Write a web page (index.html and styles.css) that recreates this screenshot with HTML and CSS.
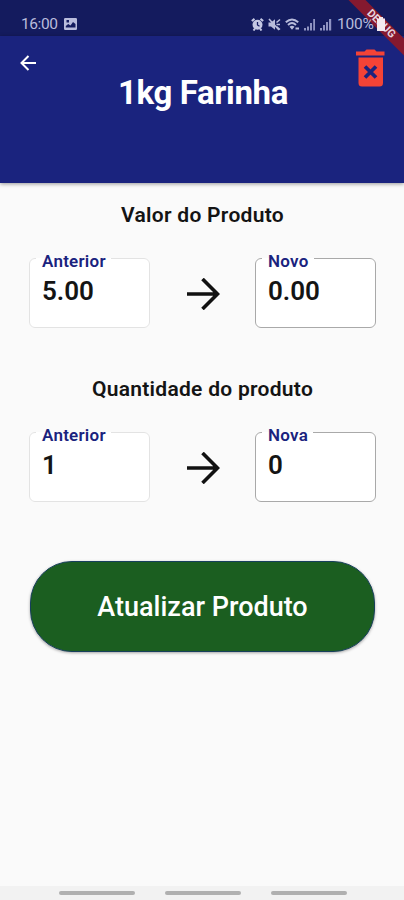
FILE: index.html
```html
<!DOCTYPE html>
<html lang="pt-BR">
<head>
<meta charset="utf-8">
<title>1kg Farinha</title>
<link rel="stylesheet" href="styles.css">
</head>
<body>
<div class="screen">
  <div class="debug"><span>DEBUG</span></div>
  <div class="status">
    <span class="clock">16:00</span>
    <svg class="picture" width="13" height="12" viewBox="0 0 13 12"><path fill="#b9bcdc" fill-rule="evenodd" d="M1.2 0H11.800Q13 0 13 1.200V10.800Q13 12 11.800 12H1.200Q0 12 0 10.800V1.200Q0 0 1.200 0ZM1.800 9.500H11.500V6L9 4 6.500 7.500 4.200 6 1.800 8ZM2.500 2V4.500H5V2Z"/></svg>
    <div class="indicators">
      <svg width="13" height="13" viewBox="0 0 13 13"><g fill="none" stroke="#c5c8e4"><path stroke-width="2" d="M.8 3 3.500 .9M12.200 3 9.500 .9M2.500 12.500 4 10.500M10.500 12.500 9 10.500"/></g><circle cx="6.500" cy="6.800" r="5" fill="#c5c8e4"/><path d="M6.500 4V7L8.500 8.300" fill="none" stroke="#171c63" stroke-width="1.300"/></svg>
      <svg width="13" height="13" viewBox="0 0 13 13"><path fill="#b9bcdc" d="M.5 4.500H3L7 1.200V11.800L3 8.500H.5Z"/><path fill="none" stroke="#b9bcdc" stroke-width="1.600" d="M8.500 4.500 12 1.500M8.500 6.500H12M8.500 8.500 12 11.500M1 1 11 12"/></svg>
      <svg width="15" height="13" viewBox="0 0 15 13"><g fill="none" stroke="#b9bcdc" stroke-width="1.900"><path d="M.8 4.300Q7 -1.500 13.200 4.300M3 7Q7 3.200 11 7"/></g><path fill="#b9bcdc" d="M4.500 8.700Q7 6.700 9.500 8.700L7 11.700ZM10.500 9.500H14V11.500H10.500Z"/></svg>
      <svg width="12" height="13" viewBox="0 0 12 13"><path fill="#8f93c2" d="M0 10H2V12.500H0ZM3 8.500H5V12.500H3ZM6 5H8V12.500H6ZM9.200 1H11V12.500H9.200Z"/></svg>
      <svg width="12" height="13" viewBox="0 0 12 13"><path fill="#8f93c2" d="M0 10H2V12.500H0ZM3 7H5V12.500H3ZM6 4H8V12.500H6ZM9 1H11.200V12.500H9Z"/></svg>
      <span class="percent">100%</span>
      <svg class="battery" width="8" height="14" viewBox="0 0 8 14"><path fill="#f3e9ef" d="M2 0H6V1.500H8V14H0V1.500H2Z"/></svg>
    </div>
  </div>
  <header class="appbar">
    <svg class="back" width="16" height="16" viewBox="0 0 16 16"><path d="M16 8H1.500M8.500 1 1.500 8 8.500 15" fill="none" stroke="#fff" stroke-width="2"/></svg>
    <h1><span>1kg Farinha</span></h1>
    <svg class="trash" width="29" height="38" viewBox="0 0 29 38" preserveAspectRatio="none"><path fill="#f44336" d="M.5 2.500H8.500L10.500 .5H18.500L20.500 2.500H28.500V6.500H0V2.500ZM2.500 8.500H27V34Q27 37.500 23.500 37.500H6Q2.500 37.500 2.500 34Z"/><path d="M9 17.500 20 28.500M20 17.500 9 28.500" stroke="#1a237e" stroke-width="3.700"/></svg>
  </header>
  <main>
    <h2><span class="t-value">Valor do Produto</span></h2>
    <div class="row">
      <fieldset class="field old"><legend>Anterior</legend><span>5.00</span></fieldset>
      <svg class="arrow" width="34" height="32" viewBox="-1 0 34 32"><path d="M0 16H31M15.500 1 30.500 16 15.500 31" fill="none" stroke="#111" stroke-width="3.600"/></svg>
      <fieldset class="field"><legend>Novo</legend><span>0.00</span></fieldset>
    </div>
    <h2><span class="t-qty">Quantidade do produto</span></h2>
    <div class="row">
      <fieldset class="field old"><legend>Anterior</legend><span>1</span></fieldset>
      <svg class="arrow" width="34" height="32" viewBox="-1 0 34 32"><path d="M0 16H31M15.500 1 30.500 16 15.500 31" fill="none" stroke="#111" stroke-width="3.600"/></svg>
      <fieldset class="field"><legend>Nova</legend><span>0</span></fieldset>
    </div>
    <button class="submit" type="button"><span>Atualizar Produto</span></button>
  </main>
  <nav><i></i><i></i><i></i></nav>
</div>
</body>
</html>
```
FILE: styles.css
```css
* { box-sizing: border-box; }
body { margin: 0; font-family: Roboto, "Liberation Sans", sans-serif; }
svg { display: block; flex: none; }
.screen { position: relative; width: 404px; height: 900px; overflow: hidden; display: flex; flex-direction: column; background: #fafafa; color: #141414; }
.status { height: 36px; flex: none; background: #141b5e; display: flex; align-items: center; padding: 12px 0 0 21px; color: #b9bcdc; }
.clock { font-size: 15.500px; line-height: 20px; width: 43px; letter-spacing: -.4px; }
.indicators { position: relative; z-index: 3; display: flex; align-items: center; margin-left: 174px; gap: 4px; }
.percent { font-size: 15.500px; line-height: 20px; margin-left: 1px; width: 37px; letter-spacing: -.2px; }
.battery { margin-left: -1px; }
.debug { position: absolute; z-index: 2; top: 18px; left: 331px; width: 100px; height: 12px; background: #85192f; transform: rotate(45deg); color: #e6d3df; font-size: 11px; font-weight: 700; line-height: 12px; text-align: center; }
.appbar { height: 147px; flex: none; background: #1a237e; color: #fff; display: flex; justify-content: space-between; align-items: flex-start; padding: 0 19px 0 20px; box-shadow: 0 1px 4px rgba(0,0,0,.4); }
.back { margin-top: 19px; width: 30px; padding-right: 14px; }
.trash { margin-top: 13px; }
h1 { margin: 37px 0 0; font-size: 33px; line-height: 40px; font-weight: 700; letter-spacing: -.35px; white-space: nowrap; }
main { flex: 1; padding: 0 28px 0 29px; }
h2 { margin: 0; padding-top: 20px; height: 68px; font-size: 21px; line-height: 24px; font-weight: 600; letter-spacing: .28px; text-align: center; white-space: nowrap; }
.row { display: flex; justify-content: space-between; align-items: flex-start; height: 106px; }
.field { margin: 0; width: 121px; height: 77px; padding: 0 0 0 6px; min-width: 0; border: 1px solid #a9a9a9; border-radius: 6px; background: #fff; }
.field.old { border-color: #e3e3e3; }
legend { height: 14px; padding: 0 5px 0 6px; font-size: 17px; line-height: 20px; font-weight: 600; letter-spacing: .25px; color: #1a237e; }
.field span { display: block; padding: 11px 6px 0; font-size: 26px; line-height: 30px; font-weight: 600; }
.arrow { margin-top: 27px; }
.submit { display: block; margin: 30px 0 0 1px; width: 345px; height: 91px; border: 1px solid #173f5c; border-radius: 42px; background: #1b5e20; color: #fff; font: 500 27px/32px Roboto, sans-serif; box-shadow: 0 1px 3px rgba(0,0,0,.35); }
nav { height: 14px; flex: none; background: #f2f2f2; display: flex; justify-content: center; gap: 30px; padding: 5px 0 0 1px; }
nav i { width: 76px; height: 4px; border-radius: 2px; background: #b0b0b0; }
```
